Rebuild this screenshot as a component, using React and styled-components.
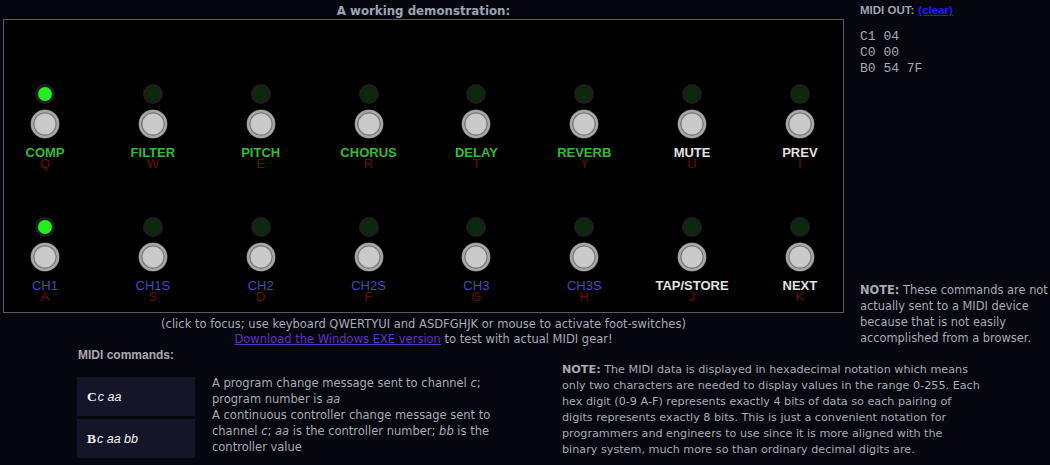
import React from "react";
import styled, { createGlobalStyle } from "styled-components";

const GlobalStyle = createGlobalStyle`
  html, body {
    margin: 0;
    padding: 0;
    background: #06060f;
  }
  body {
    font-family: "DejaVu Sans", Verdana, sans-serif;
    font-size: 11.5px;
    color: #a9a9b3;
  }
`;

const switches = [
  [
    { label: "COMP", key: "Q", tone: "green", on: true },
    { label: "FILTER", key: "W", tone: "green" },
    { label: "PITCH", key: "E", tone: "green" },
    { label: "CHORUS", key: "R", tone: "green" },
    { label: "DELAY", key: "T", tone: "green" },
    { label: "REVERB", key: "Y", tone: "green" },
    { label: "MUTE", key: "U", tone: "white" },
    { label: "PREV", key: "I", tone: "white" },
  ],
  [
    { label: "CH1", key: "A", tone: "blue", on: true },
    { label: "CH1S", key: "S", tone: "blue" },
    { label: "CH2", key: "D", tone: "blue" },
    { label: "CH2S", key: "F", tone: "blue" },
    { label: "CH3", key: "G", tone: "blue" },
    { label: "CH3S", key: "H", tone: "blue" },
    { label: "TAP/STORE", key: "J", tone: "white" },
    { label: "NEXT", key: "K", tone: "white" },
  ],
];

const toneColors = {
  green: "#35bb35",
  blue: "#4646cc",
  white: "#e2e2e2",
};

const Page = styled.div`
  display: grid;
  grid-template-columns: 844px 1fr;
  column-gap: 16px;
  width: 1050px;
`;

const Demo = styled.div`
  padding-left: 3px;
`;

const Title = styled.div`
  padding-top: 3px;
  height: 16px;
  line-height: 16px;
  text-align: center;
  font-weight: bold;
  font-size: 11.8px;
  color: #9da4b2;
`;

const Panel = styled.div`
  box-sizing: border-box;
  width: 841px;
  height: 294px;
  border: 1px solid #5a5a5a;
  background: #000;
  padding: 64px 3px 9px 1px;
  display: grid;
  grid-template-columns: repeat(8, 80px);
  justify-content: space-between;
  row-gap: 47px;
`;

const SwitchCell = styled.div`
  display: flex;
  flex-direction: column;
  align-items: center;
`;

const Led = styled.div`
  box-sizing: border-box;
  width: 20px;
  height: 20px;
  border-radius: 50%;
  border: 3px solid #1d1d1d;
  background: ${(p) => (p.$on ? "#22ee22" : "#0b2a0b")};
`;

const FootSwitch = styled.div`
  box-sizing: border-box;
  margin-top: 6px;
  width: 28px;
  height: 28px;
  border-radius: 50%;
  border: 2px solid #a8a8a8;
  background: #cacaca;
  box-shadow: inset 0 0 0 1.5px #7c7c7c, 0 0 0 0.5px #6a6a6a;
`;

const Label = styled.div`
  margin-top: 8px;
  font-family: "Liberation Sans", Arial, sans-serif;
  font-size: 13px;
  line-height: 13px;
  white-space: nowrap;
  font-weight: ${(p) => (p.$tone === "blue" ? "normal" : "bold")};
  color: ${(p) => toneColors[p.$tone]};
`;

const KeyHint = styled.div`
  margin-top: -1px;
  font-family: "Liberation Sans", Arial, sans-serif;
  font-size: 13px;
  line-height: 12px;
  color: #6c0d0d;
`;

const Caption = styled.div`
  margin-top: 4px;
  width: 841px;
  text-align: center;
  line-height: 15px;
  white-space: nowrap;
`;

const DownloadLink = styled.a`
  color: #5e31c4;
  text-decoration: underline;
`;

const Side = styled.div`
  display: flex;
  flex-direction: column;
  padding-top: 2px;
  padding-bottom: 1px;
`;

const SideHeading = styled.div`
  line-height: 16px;
  font-family: "Liberation Sans", Arial, sans-serif;
  font-size: 11.5px;
  font-weight: bold;
  color: #9da4b2;
`;

const ClearLink = styled.a`
  margin-left: 4px;
  color: #1c1cff;
  text-decoration: underline;
`;

const MidiLog = styled.pre`
  margin: 11px 0 0;
  font-family: "Liberation Mono", "Courier New", monospace;
  font-size: 13px;
  line-height: 16px;
  color: #a9a9b3;
`;

const SideNote = styled.div`
  margin-top: auto;
  line-height: 16px;
  font-size: 11.4px;
  white-space: nowrap;
`;

const Lower = styled.div`
  grid-column: 1 / -1;
  display: flex;
  padding-left: 78px;
`;

const Commands = styled.div`
  width: 484px;
`;

const CommandsHeading = styled.div`
  line-height: 16px;
  font-family: "Liberation Sans", Arial, sans-serif;
  font-size: 12px;
  font-weight: bold;
  color: #a9a9b3;
`;

const CommandTable = styled.div`
  margin-top: 12px;
  margin-left: -1px;
  display: grid;
  grid-template-columns: 118px auto;
  column-gap: 17px;
  align-items: start;
`;

const CodeStack = styled.div`
  padding-top: 2px;
  display: flex;
  flex-direction: column;
  gap: 3px;
`;

const CodeCell = styled.div`
  height: 39px;
  display: flex;
  align-items: center;
  padding-left: 10px;
  background: #15152a;
  color: #f4f4f4;
  font-family: "Liberation Sans", Arial, sans-serif;
  font-size: 12.5px;
  b {
    font-family: "Liberation Serif", "Times New Roman", serif;
    font-size: 13.5px;
  }
  i {
    padding-left: 1px;
  }
`;

const Descriptions = styled.div`
  line-height: 16px;
  white-space: nowrap;
`;

const Note = styled.div`
  padding-top: 15px;
  line-height: 16px;
  font-size: 11.2px;
  white-space: nowrap;
`;

const NoteTag = styled.b`
  color: #a9a9b3;
`;

export default function App() {
  return (
    <>
      <GlobalStyle />
      <Page>
        <Demo>
          <Title>A working demonstration:</Title>
          <Panel>
            {switches.flat().map((s) => (
              <SwitchCell key={s.key}>
                <Led $on={s.on} />
                <FootSwitch />
                <Label $tone={s.tone}>{s.label}</Label>
                <KeyHint>{s.key}</KeyHint>
              </SwitchCell>
            ))}
          </Panel>
          <Caption>
            (click to focus; use keyboard QWERTYUI and ASDFGHJK or mouse to activate foot-switches)
            <br />
            <DownloadLink href="#">Download the Windows EXE version</DownloadLink> to test with actual MIDI gear!
          </Caption>
        </Demo>
        <Side>
          <SideHeading>
            MIDI OUT:<ClearLink href="#">(clear)</ClearLink>
          </SideHeading>
          <MidiLog>{"C1 04\nC0 00\nB0 54 7F"}</MidiLog>
          <SideNote>
            <NoteTag>NOTE:</NoteTag> These commands are not
            <br />
            actually sent to a MIDI device
            <br />
            because that is not easily
            <br />
            accomplished from a browser.
          </SideNote>
        </Side>
        <Lower>
          <Commands>
            <CommandsHeading>MIDI commands:</CommandsHeading>
            <CommandTable>
              <CodeStack>
                <CodeCell>
                  <b>C</b>
                  <i>c aa</i>
                </CodeCell>
                <CodeCell>
                  <b>B</b>
                  <i>c aa bb</i>
                </CodeCell>
              </CodeStack>
              <Descriptions>
                A program change message sent to channel <i>c</i>;
                <br />
                program number is <i>aa</i>
                <br />
                A continuous controller change message sent to
                <br />
                channel <i>c</i>; <i>aa</i> is the controller number; <i>bb</i> is the
                <br />
                controller value
              </Descriptions>
            </CommandTable>
          </Commands>
          <Note>
            <NoteTag>NOTE:</NoteTag> The MIDI data is displayed in hexadecimal notation which means
            <br />
            only two characters are needed to display values in the range 0-255. Each
            <br />
            hex digit (0-9 A-F) represents exactly 4 bits of data so each pairing of
            <br />
            digits represents exactly 8 bits. This is just a convenient notation for
            <br />
            programmers and engineers to use since it is more aligned with the
            <br />
            binary system, much more so than ordinary decimal digits are.
          </Note>
        </Lower>
      </Page>
    </>
  );
}
